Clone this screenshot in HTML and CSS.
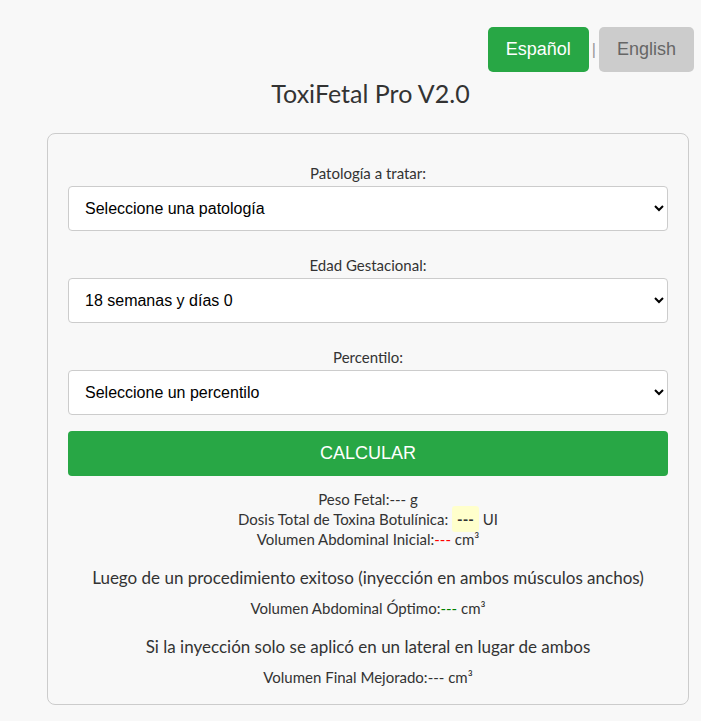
FILE: index.html
```html
<!DOCTYPE html>
<html lang="es">
  <head>
    <meta charset="utf-8">
    <title>ToxiFetal Pro V2.0</title>
    <link rel="stylesheet" href="styles.css">
  </head>
  <body>
    <!-- Language switch -->
    <div class="lang-bar">
      <button class="lang-btn active">Español</button>
      <span class="lang-sep">|</span>
      <button class="lang-btn">English</button>
    </div>

    <h1 class="title">ToxiFetal Pro V2.0</h1>

    <!-- Calculator -->
    <div class="container">
      <form class="calc-form">
        <label for="patologia">Patología a tratar:</label>
        <select id="patologia">
          <option>Seleccione una patología</option>
        </select>

        <label for="edad">Edad Gestacional:</label>
        <select id="edad">
          <option>18 semanas y días 0</option>
        </select>

        <label for="percentil">Percentilo:</label>
        <select id="percentil">
          <option>Seleccione un percentilo</option>
        </select>

        <button type="button" class="calc-btn">CALCULAR</button>
      </form>

      <div class="results">
        <p>Peso Fetal:<span>---</span> g</p>
        <p>Dosis Total de Toxina Botulínica: <span class="highlight">---</span> UI</p>
        <p>Volumen Abdominal Inicial:<span class="red">---</span> cm³</p>
      </div>

      <h3 class="note">Luego de un procedimiento exitoso (inyección en ambos músculos anchos)</h3>
      <p class="result-line">Volumen Abdominal Óptimo:<span class="green">---</span> cm³</p>

      <h3 class="note">Si la inyección solo se aplicó en un lateral en lugar de ambos</h3>
      <p class="result-line">Volumen Final Mejorado:<span>---</span> cm³</p>
    </div>
  </body>
</html>
```

FILE: styles.css
```css
body {
  background-color: #f8f8f8;
  font-family: Lato, "Open Sans", sans-serif;
  color: #333;
  margin: 0;
  padding: 27px 7px 17px 47px;
}

.lang-bar {
  display: flex;
  justify-content: flex-end;
  align-items: center;
  gap: 3px;
}

.lang-btn {
  font-family: "Liberation Sans", Arial, sans-serif;
  font-size: 18px;
  height: 45px;
  width: 95px;
  padding: 0;
  border: none;
  border-radius: 5px;
  background-color: #cccccc;
  color: #666;
  cursor: pointer;
}

.lang-btn.active {
  background-color: #28a745;
  color: #fff;
  width: 101px;
}

.lang-sep {
  color: #999;
  font-family: "Liberation Sans", Arial, sans-serif;
  font-size: 16px;
}

.title {
  font-size: 25px;
  font-weight: 400;
  text-align: center;
  margin: 6px 0 25px 0;
  color: #333;
  line-height: 30px;
}

.container {
  border: 1px solid #ccc;
  border-radius: 8px;
  padding: 20px 20px 17px 20px;
  margin-right: 5px;
  text-align: center;
}

.calc-form {
  display: flex;
  flex-direction: column;
}

label {
  font-size: 15px;
  margin: 24px 0 3px 0;
  line-height: 20px;
}

label:first-child {
  margin-top: 9px;
}

select {
  font-family: "Liberation Sans", Arial, sans-serif;
  font-size: 16px;
  height: 45px;
  padding: 0 12px;
  border: 1px solid #ccc;
  border-radius: 4px;
  background-color: #fff;
  color: #000;
}

.calc-btn {
  font-family: "Liberation Sans", Arial, sans-serif;
  font-size: 18px;
  height: 45px;
  border: none;
  border-radius: 4px;
  background-color: #28a745;
  color: #fff;
  margin-top: 16px;
  cursor: pointer;
}

.results {
  margin-top: 13px;
}

.results p,
.result-line {
  font-size: 15px;
  line-height: 20px;
  margin: 0;
}

.highlight {
  background-color: #ffffcc;
  padding: 4px 5px;
  border-radius: 3px;
  font-weight: bold;
}

.red {
  color: red;
}

.green {
  color: green;
}

.note {
  font-size: 17px;
  font-weight: 400;
  margin: 18px 0 9px 0;
  line-height: 22px;
}
```
